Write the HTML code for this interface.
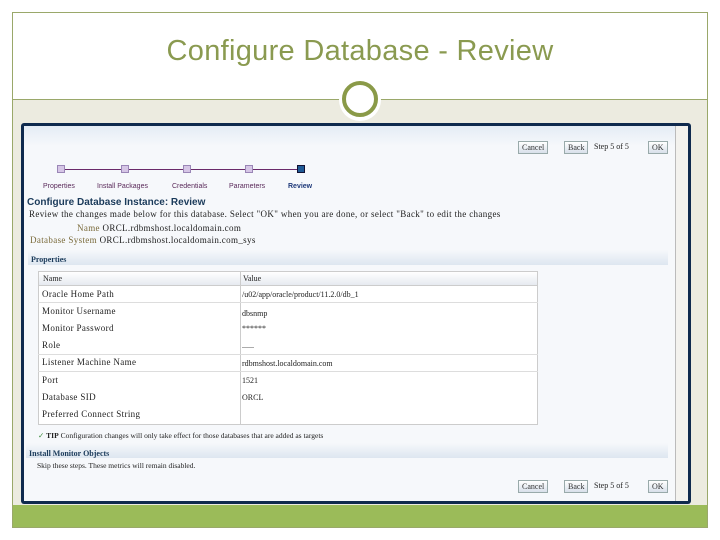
<!DOCTYPE html>
<html><head><style>
*{margin:0;padding:0;box-sizing:border-box}
body{width:720px;height:540px;background:#fff;position:relative;overflow:hidden;font-family:"Liberation Serif",serif}
.abs{position:absolute}
.frame{left:12px;top:12px;width:696px;height:516px;border:1px solid #9aa86a}
.title{left:0;width:720px;top:35px;text-align:center;font-family:"Liberation Sans",sans-serif;font-size:29px;color:#8a9a50;letter-spacing:0.3px}
.beige{left:13px;top:100px;width:694px;height:405px;background:#ecebe0}
.hline{left:13px;top:99px;width:694px;height:1px;background:#9aa86a}
.green{left:13px;top:505px;width:694px;height:22px;background:#9bbb59}
.circ{left:339px;top:79px;width:42px;height:42px;border-radius:50%;background:#fff}
.circ2{left:342px;top:81px;width:36px;height:36px;border-radius:50%;border:4px solid #8a9a48}
.shot{left:21px;top:123px;width:670px;height:381px;background:#0f2a4e;border-radius:3px}
.in{left:24px;top:126px;width:651px;height:375px;background:linear-gradient(#e4ecf5,#f6f8fb 20px,#f6f8fb)}
.sb{left:675px;top:126px;width:13px;height:375px;background:#f3f2ee;border-left:1px solid #bbb}
.t{font-size:8px;color:#222;white-space:nowrap}
.w{font-size:9px;letter-spacing:0.35px}
.btn{font-size:8px;border:1px solid #9aa;background:linear-gradient(#fff,#d8e0ea);padding:1px 3px;color:#333}
.lbl{font-size:7px;color:#5a2a5a;font-family:"Liberation Sans",sans-serif}
.sq{width:8px;height:8px;background:#d6c6e6;border:1px solid #9a86b6}
.band{background:linear-gradient(#f6f8fb,#dde6f0);}
.row{left:38px;width:500px;height:17px;border-top:1px solid #ddd}
</style></head><body>
<div class="abs frame"></div>
<div class="abs title">Configure Database - Review</div>
<div class="abs beige"></div>
<div class="abs hline"></div>
<div class="abs green"></div>
<div class="abs shot"></div>
<div class="abs in"></div>
<div class="abs sb"></div>
<div class="abs circ"></div>
<div class="abs circ2"></div>

<div class="abs btn" style="left:518px;top:141px">Cancel</div>
<div class="abs btn" style="left:564px;top:141px">Back</div>
<div class="abs t" style="left:594px;top:142px">Step 5 of 5</div>
<div class="abs btn" style="left:648px;top:141px">OK</div>

<div class="abs" style="left:60px;top:169px;width:240px;height:1px;background:#6a2a6a"></div>
<div class="abs sq" style="left:57px;top:165px"></div>
<div class="abs sq" style="left:121px;top:165px"></div>
<div class="abs sq" style="left:183px;top:165px"></div>
<div class="abs sq" style="left:245px;top:165px"></div>
<div class="abs sq" style="left:297px;top:165px;background:#1f5a96;border-color:#113"></div>
<div class="abs lbl" style="left:43px;top:183px">Properties</div>
<div class="abs lbl" style="left:97px;top:183px">Install Packages</div>
<div class="abs lbl" style="left:172px;top:183px">Credentials</div>
<div class="abs lbl" style="left:229px;top:183px">Parameters</div>
<div class="abs lbl" style="left:288px;top:183px;color:#1f3a7a;font-weight:bold">Review</div>

<div class="abs" style="left:27px;top:197px;font-family:'Liberation Sans',sans-serif;font-size:10px;color:#1a3a5a;font-weight:bold">Configure Database Instance: Review</div>
<div class="abs t w" style="left:29px;top:209px">Review the changes made below for this database. Select "OK" when you are done, or select "Back" to edit the changes</div>
<div class="abs t w" style="left:77px;top:223px"><span style="color:#7a6a3a">Name</span> ORCL.rdbmshost.localdomain.com</div>
<div class="abs t w" style="left:30px;top:235px"><span style="color:#7a6a3a">Database System</span> ORCL.rdbmshost.localdomain.com_sys</div>

<div class="abs band" style="left:28px;top:250px;width:640px;height:15px"></div>
<div class="abs t" style="left:31px;top:255px;font-weight:bold;color:#1a3a5a">Properties</div>

<div class="abs" style="left:38px;top:271px;width:500px;height:154px;background:#fff;border:1px solid #ccc"></div>
<div class="abs" style="left:38px;top:271px;width:500px;height:15px;background:linear-gradient(#fff,#e6eaf0);border:1px solid #ccc"></div>
<div class="abs" style="left:240px;top:271px;width:1px;height:154px;background:#ccc"></div>
<div class="abs t" style="left:43px;top:274px">Name</div>
<div class="abs t" style="left:243px;top:274px">Value</div>
<div class="abs row" style="top:302px"></div>
<div class="abs row" style="top:354px"></div>
<div class="abs row" style="top:371px"></div>
<div class="abs t w" style="left:42px;top:289px">Oracle Home Path</div><div class="abs t" style="left:242px;top:290px">/u02/app/oracle/product/11.2.0/db_1</div>
<div class="abs t w" style="left:42px;top:306px">Monitor Username</div><div class="abs t" style="left:242px;top:309px">dbsnmp</div>
<div class="abs t w" style="left:42px;top:323px">Monitor Password</div><div class="abs t" style="left:242px;top:324px">******</div>
<div class="abs t w" style="left:42px;top:340px">Role</div><div class="abs t" style="left:242px;top:341px">......</div>
<div class="abs t w" style="left:42px;top:357px">Listener Machine Name</div><div class="abs t" style="left:242px;top:359px">rdbmshost.localdomain.com</div>
<div class="abs t w" style="left:42px;top:375px">Port</div><div class="abs t" style="left:242px;top:376px">1521</div>
<div class="abs t w" style="left:42px;top:392px">Database SID</div><div class="abs t" style="left:242px;top:393px">ORCL</div>
<div class="abs t w" style="left:42px;top:409px">Preferred Connect String</div>

<div class="abs t" style="left:38px;top:431px;font-size:7.5px"><span style="color:#3a8a3a">&#10003;</span> <b>TIP</b> Configuration changes will only take effect for those databases that are added as targets</div>
<div class="abs band" style="left:26px;top:443px;width:642px;height:15px"></div>
<div class="abs t" style="left:29px;top:449px;font-weight:bold;color:#1a3a5a">Install Monitor Objects</div>
<div class="abs t" style="left:37px;top:461px;font-size:7.5px">Skip these steps. These metrics will remain disabled.</div>

<div class="abs btn" style="left:518px;top:480px">Cancel</div>
<div class="abs btn" style="left:564px;top:480px">Back</div>
<div class="abs t" style="left:594px;top:481px">Step 5 of 5</div>
<div class="abs btn" style="left:648px;top:480px">OK</div>
</body></html>
